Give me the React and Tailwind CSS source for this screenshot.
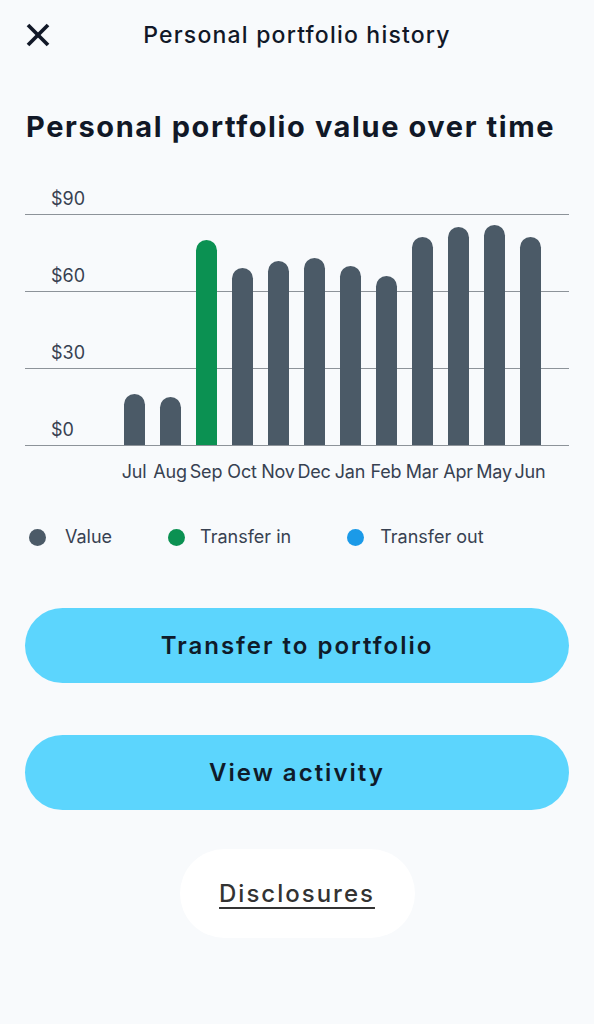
import React from "react";

const bars = [
  { m: "Jul", h: 51, c: "bg-[#4b5a67]" },
  { m: "Aug", h: 48, c: "bg-[#4b5a67]" },
  { m: "Sep", h: 205, c: "bg-[#0b9152]" },
  { m: "Oct", h: 177, c: "bg-[#4b5a67]" },
  { m: "Nov", h: 184, c: "bg-[#4b5a67]" },
  { m: "Dec", h: 187, c: "bg-[#4b5a67]" },
  { m: "Jan", h: 179, c: "bg-[#4b5a67]" },
  { m: "Feb", h: 169, c: "bg-[#4b5a67]" },
  { m: "Mar", h: 208, c: "bg-[#4b5a67]" },
  { m: "Apr", h: 218, c: "bg-[#4b5a67]" },
  { m: "May", h: 220, c: "bg-[#4b5a67]" },
  { m: "Jun", h: 208, c: "bg-[#4b5a67]" },
];

const font = { fontFamily: "Inter, 'Noto Sans', 'Liberation Sans', sans-serif" };

export default function App() {
  return (
    <div className="min-h-[1024px] w-[594px] bg-[#f8fafc] text-[#111827]" style={font}>
      {/* Header */}
      <div className="grid h-[70px] grid-cols-[1fr_auto_1fr] items-center px-[26px]">
        <div className="flex items-center">
          <svg width="24" height="24" viewBox="0 0 24 24" fill="none" stroke="#111827" strokeWidth="3.8" strokeLinecap="butt">
            <path d="M2 2 22 22" />
            <path d="M22 2 2 22" />
          </svg>
        </div>
        <div className="text-[23px] font-medium leading-[28px] tracking-[1.2px]">Personal portfolio history</div>
        <div />
      </div>

      {/* Heading */}
      <h1 className="mt-[40px] px-[26px] text-[29px] font-bold leading-[34px] tracking-[1.6px]">
        Personal portfolio value over time
      </h1>

      {/* Chart */}
      <div className="mx-[25px] mt-[36px]">
        <div className="relative">
          <div className="flex h-[35px] items-end border-b border-[#8d9399] pb-[4px] pl-[26px] text-[18px] leading-[22px] text-[#374151]">$90</div>
          <div className="flex h-[77px] items-end border-b border-[#8d9399] pb-[4px] pl-[26px] text-[18px] leading-[22px] text-[#374151]">$60</div>
          <div className="flex h-[77px] items-end border-b border-[#8d9399] pb-[4px] pl-[26px] text-[18px] leading-[22px] text-[#374151]">$30</div>
          <div className="flex h-[77px] items-end border-b border-[#8d9399] pb-[4px] pl-[26px] text-[18px] leading-[22px] text-[#374151]">$0</div>
          <div className="absolute bottom-[1px] left-[99px] flex items-end gap-[15px]">
            {bars.map((b) => (
              <div key={b.m} className={`w-[21px] rounded-t-full ${b.c}`} style={{ height: b.h }} />
            ))}
          </div>
        </div>
        <div className="mt-[14px] flex pl-[91px] text-[18px] leading-[24px] tracking-[-0.2px] text-[#374151]">
          {bars.map((b) => (
            <div key={b.m} className="flex w-[36px] justify-center whitespace-nowrap">{b.m}</div>
          ))}
        </div>
      </div>

      {/* Legend */}
      <div className="mt-[41px] flex items-center gap-[56px] pl-[29px] text-[18px] leading-[24px] text-[#374151]">
        <div className="flex items-center gap-[19px]">
          <span className="h-[17px] w-[17px] rounded-full bg-[#4b5a67]" />
          <span>Value</span>
        </div>
        <div className="flex items-center gap-[15px]">
          <span className="h-[17px] w-[17px] rounded-full bg-[#0b9152]" />
          <span>Transfer in</span>
        </div>
        <div className="flex items-center gap-[16px]">
          <span className="h-[17px] w-[17px] rounded-full bg-[#1b9ae8]" />
          <span>Transfer out</span>
        </div>
      </div>

      {/* Buttons */}
      <div className="mt-[59px] flex flex-col items-center px-[25px]">
        <button className="flex h-[75px] w-full items-center justify-center rounded-full bg-[#5cd5fd] text-[24px] font-semibold tracking-[2px] text-[#0f1b2a]">
          Transfer to portfolio
        </button>
        <button className="mt-[52px] flex h-[75px] w-full items-center justify-center rounded-full bg-[#5cd5fd] text-[24px] font-semibold tracking-[2px] text-[#0f1b2a]">
          View activity
        </button>
        <button className="mt-[39px] flex h-[89px] w-[235px] items-center justify-center rounded-full bg-white text-[24px] font-medium tracking-[2px] text-[#333333] underline decoration-[1.5px] underline-offset-[5px]">
          Disclosures
        </button>
      </div>
    </div>
  );
}
